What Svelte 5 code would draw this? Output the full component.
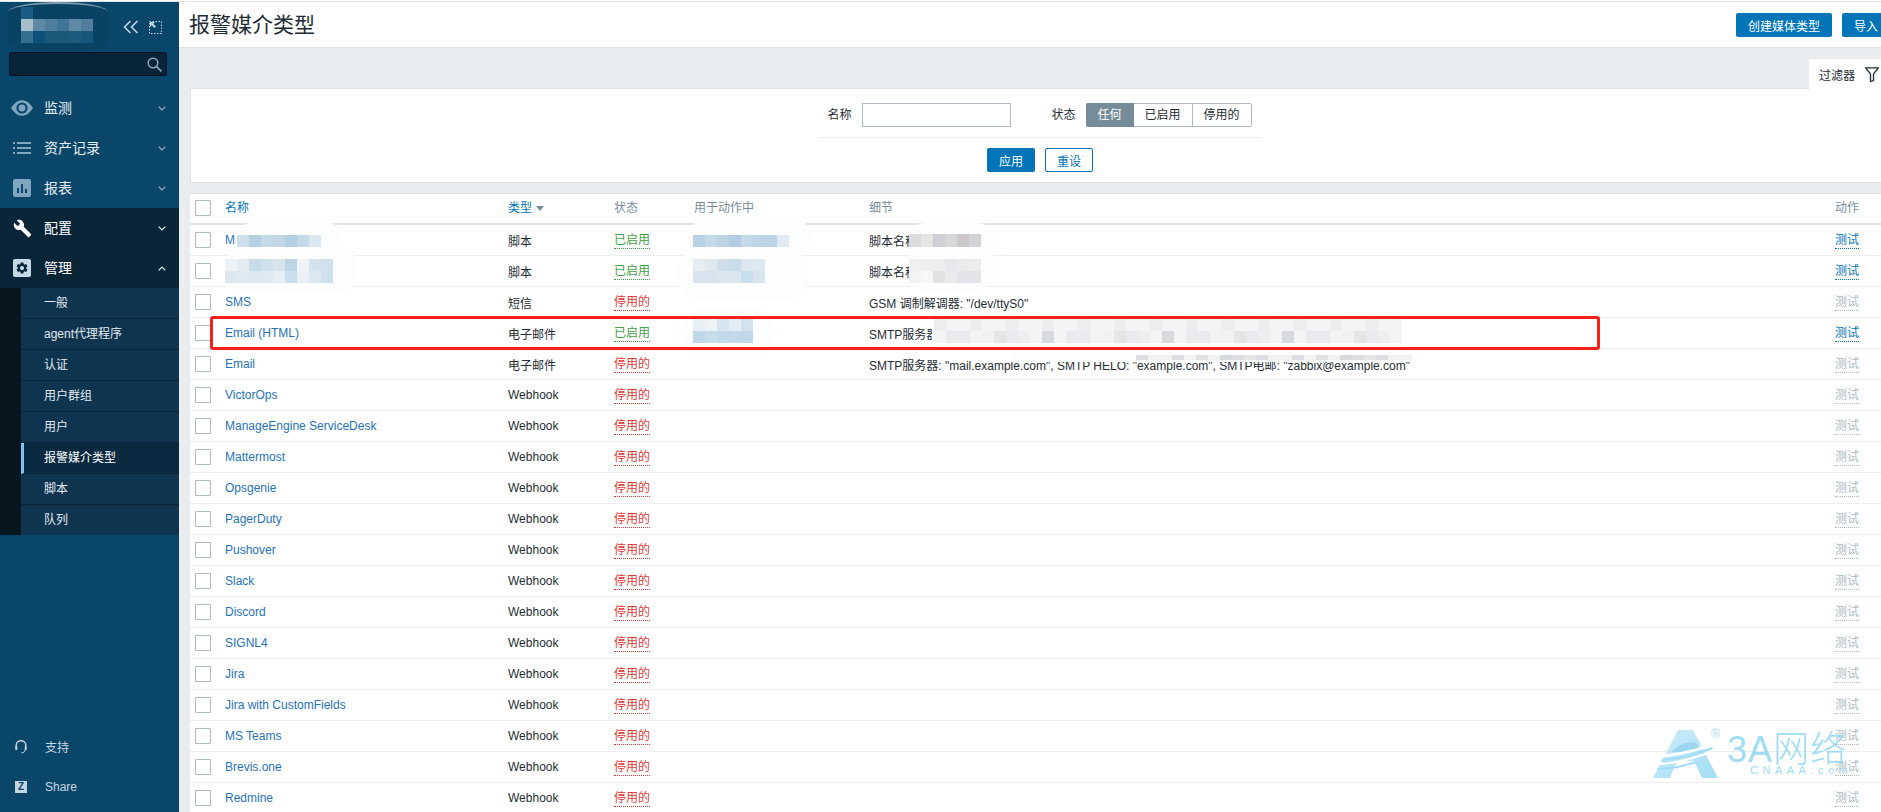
<script>
  const menu = [
    { label: '监测', icon: 'eye', open: false },
    { label: '资产记录', icon: 'list', open: false },
    { label: '报表', icon: 'chart', open: false },
    { label: '配置', icon: 'wrench', open: false, dark: true },
    { label: '管理', icon: 'gear', open: true, dark: true }
  ]

  const subItems = ['一般', 'agent代理程序', '认证', '用户群组', '用户', '报警媒介类型', '脚本', '队列']

  const rows = [
    { name: 'M', type: '脚本', on: true, detail: '脚本名称', test: true },
    { name: '', type: '脚本', on: true, detail: '脚本名称', test: true },
    { name: 'SMS', type: '短信', detail: 'GSM 调制解调器: "/dev/ttyS0"' },
    { name: 'Email (HTML)', type: '电子邮件', on: true, detail: 'SMTP服务器', test: true },
    { name: 'Email', type: '电子邮件', detail: 'SMTP服务器: "mail.example.com", SMTP HELO: "example.com", SMTP电邮: "zabbix@example.com"' },
    ...['VictorOps', 'ManageEngine ServiceDesk', 'Mattermost', 'Opsgenie', 'PagerDuty', 'Pushover', 'Slack', 'Discord', 'SIGNL4', 'Jira', 'Jira with CustomFields', 'MS Teams', 'Brevis.one', 'Redmine'].map((name) => ({ name, type: 'Webhook', detail: '' }))
  ]

  const greys = ['#f1f2f2', '#e6e5e6', '#dcdde1', '#ced0d4', '#e9ebee', '#d6dadd', '#f5f4f4', '#dfe1e3', '#c8cdd0', '#eceef0']
  const noise = (n, seed) => Array.from({ length: n }, (_, i) => greys[(i * 7 + seed * 3 + (i % 5) * i) % greys.length])

  // blurred-out parts of the screenshot
  const smudges = [
    { x: 240, y: 222, w: 100, h: 26, r: 14 },
    { x: 225, y: 248, w: 132, h: 44, r: 18 },
    { x: 690, y: 216, w: 120, h: 44, r: 20 },
    { x: 678, y: 248, w: 130, h: 52, r: 22 },
    { x: 684, y: 308, w: 88, h: 50, r: 20 },
    { x: 909, y: 223, w: 84, h: 68, r: 16 },
    { x: 932, y: 312, w: 470, h: 38, r: 6 },
    { x: 1011, y: 352, w: 401, h: 10, r: 0 }
  ]

  const patches = [
    { x: 237, y: 235, cw: 12, ch: 12, cols: 7, cells: ['#cfe0ed', '#b5cfe3', '#c6d9e8', '#c5d7e6', '#b5cfe3', '#c6d9e8', '#dbe8f1'] },
    { x: 225, y: 259, cw: 12, ch: 12, cols: 9, cells: ['#edf2f7', '#e4ecf3', '#c8dbe8', '#d0e1ec', '#d7e4ee', '#bdd4e5', '#f0f4f8', '#d5e3ee', '#cfe0ec', '#dce8f1', '#e0eaf2', '#dde8f1', '#dfe9f2', '#e8eef5', '#cbdeeb', '#e9eff6', '#dce8f1', '#cde0ec'] },
    { x: 693, y: 235, cw: 12, ch: 12, cols: 8, cells: ['#b9d1e5', '#c6d9e8', '#bed3e4', '#b2cde3', '#c5d9e8', '#bfd4e6', '#bdd3e6', '#e2eaf2'] },
    { x: 693, y: 259, cw: 12, ch: 12, cols: 6, cells: ['#e6edf5', '#e0e8ef', '#cfdde8', '#c9dce9', '#dbe6ef', '#dee8f0', '#d7e4ee', '#d7e4ee', '#dbe6ef', '#dbe6ef', '#c9deeb', '#d7e5ef'] },
    { x: 693, y: 319, cw: 12, ch: 12, cols: 5, cells: ['#e8eff6', '#eef3f8', '#d5e4ee', '#e3edf3', '#d3e2ec', '#c2d7e8', '#c8dcea', '#c2d9e9', '#c3d9e9', '#c2d8e8'] },
    { x: 909, y: 234, cw: 12, ch: 13, cols: 6, cells: ['#dcdcdf', '#e6e5e1', '#cfd0d6', '#d7d6da', '#ccc8cc', '#d0d4d7'] },
    { x: 909, y: 259, cw: 12, ch: 12, cols: 6, cells: ['#f0f0f1', '#efeff0', '#eeeeef', '#e8e8ec', '#ebebed', '#ececee', '#f3f3f1', '#f7f7f4', '#e2e2e3', '#eaeaec', '#e2e4e9', '#e3e3e8'] },
    { x: 934, y: 319, cw: 12, ch: 12, cols: 39, cells: [...noise(39, 1).map((c, i) => (i % 3 ? '#f3f4f4' : '#eceeee')), ...noise(39, 2)] },
    { x: 1136, y: 355, cw: 12, ch: 5, cols: 23, cells: noise(23, 4) }
  ]

  const logoCells = ['#1b5c85', '#0a4264', '#0a4264', '#0a4264', '#0a4264', '#0a4264', '#a9bfcc', '#5f8aa5', '#4f7f9c', '#3f7595', '#5f8aa5', '#4f7f9c', '#346f90', '#0c5179', '#1c5878', '#1c5878', '#1f5b7d', '#17557a']
</script>

<div class="app">
  <div class="topline"></div>
  <div class="frame">
    <aside class="sidebar">
      <div class="brand">
        <div class="brand-blur"></div>
        <div class="brand-cells">
          {#each logoCells as c}
            <i style="background:{c}"></i>
          {/each}
        </div>
        <div class="brand-tools">
          <svg width="16" height="14" viewBox="0 0 16 14" fill="none" stroke="#c3d5e0" stroke-width="1.6">
            <path d="M7.5 1 1.5 7l6 6M14.5 1l-6 6 6 6" />
          </svg>
          <svg width="13" height="13" viewBox="0 0 13 13" fill="none">
            <rect x=".5" y=".5" width="12" height="12" stroke="#c3d5e0" stroke-dasharray="1.5 1.5" />
            <path d="M1 1h5L4.3 2.7 7 5.4 5.4 7 2.7 4.3 1 6z" fill="#c3d5e0" />
          </svg>
        </div>
      </div>
      <div class="search">
        <svg width="15" height="15" viewBox="0 0 15 15" fill="none" stroke="#8fa9b9" stroke-width="1.5">
          <circle cx="6" cy="6" r="4.8" />
          <path d="M9.6 9.6 14.4 14.4" />
        </svg>
      </div>

      <nav class="nav">
        {#each menu as item}
          <div class="nav-item" class:dark={item.dark}>
            <span class="nav-icon">
              {#if item.icon === 'eye'}
                <svg width="22" height="16" viewBox="0 0 22 16">
                  <path d="M0 8C3.5 2.6 7 .2 11 .2S18.500 2.600 22 8c-3.500 5.400-7 7.800-11 7.800S3.500 13.400 0 8z" fill="#7ea6bf" />
                  <circle cx="11" cy="8" r="5.600" fill="#0a466a" />
                  <circle cx="11" cy="8" r="3.400" fill="#7ea6bf" />
                </svg>
              {:else if item.icon === 'list'}
                <svg width="18" height="12" viewBox="0 0 18 12" fill="#7ea6bf">
                  <rect width="2" height="2" /><rect x="4" width="14" height="2" />
                  <rect y="5" width="2" height="2" /><rect x="4" y="5" width="14" height="2" />
                  <rect y="10" width="2" height="2" /><rect x="4" y="10" width="14" height="2" />
                </svg>
              {:else if item.icon === 'chart'}
                <svg width="18" height="18" viewBox="0 0 18 18">
                  <rect width="18" height="18" rx="2" fill="#7ea6bf" />
                  <path d="M4 9h2v5H4zM8 5h2v9H8zM12 10h2v4h-2z" fill="#0a466a" />
                </svg>
              {:else if item.icon === 'wrench'}
                <svg width="19" height="19" viewBox="0 0 24 24" fill="#fff">
                  <path d="M22.700 19l-9.100-9.100c.9-2.300.4-5-1.500-6.900-2-2-5-2.400-7.400-1.300L9 6 6 9 1.600 4.700C.4 7.100.9 10.100 2.900 12.100c1.900 1.900 4.600 2.400 6.900 1.500l9.100 9.100c.4.4 1 .4 1.400 0l2.300-2.300c.5-.4.5-1.100.1-1.400z" />
                </svg>
              {:else}
                <svg width="18" height="18" viewBox="0 0 18 18">
                  <rect width="18" height="18" rx="2" fill="#c3d9e6" />
                  <path transform="translate(2 2) scale(.583)" fill="#0a2538" d="M19.140 12.940c.04-.3.06-.61.06-.94 0-.32-.02-.64-.07-.94l2.030-1.580c.18-.14.23-.41.12-.61l-1.920-3.320c-.12-.22-.37-.29-.59-.22l-2.390.96c-.5-.38-1.030-.7-1.620-.94l-.36-2.540c-.04-.24-.24-.41-.48-.41h-3.840c-.24 0-.43.17-.47.41l-.36 2.540c-.59.24-1.130.57-1.620.94l-2.390-.96c-.22-.08-.47 0-.59.22L2.740 8.870c-.12.21-.08.47.12.61l2.030 1.580c-.05.3-.07.62-.07.94s.02.64.07.94l-2.030 1.580c-.18.14-.23.41-.12.61l1.920 3.320c.12.22.37.29.59.22l2.390-.96c.5.38 1.030.7 1.620.94l.36 2.540c.05.24.24.41.48.41h3.840c.24 0 .44-.17.47-.41l.36-2.540c.59-.24 1.130-.56 1.620-.94l2.390.96c.22.08.47 0 .59-.22l1.920-3.320c.12-.22.07-.47-.12-.61l-2.010-1.580zM12 15.600c-1.980 0-3.600-1.620-3.600-3.600s1.620-3.600 3.600-3.600 3.600 1.620 3.600 3.600-1.620 3.600-3.600 3.600z" />
                </svg>
              {/if}
            </span>
            <span class="nav-label">{item.label}</span>
            <svg class="chev" width="8" height="5" viewBox="0 0 8 5" fill="none" stroke={item.dark ? '#e6eef3' : '#8fb0c4'} stroke-width="1.200">
              <path d={item.open ? 'M.7 4.300 4 1l3.300 3.300' : 'M.7.7 4 4l3.300-3.300'} />
            </svg>
          </div>
        {/each}

        <ul class="sub">
          {#each subItems as s}
            <li class:selected={s === '报警媒介类型'}>{s}</li>
          {/each}
        </ul>
      </nav>

      <div class="side-foot">
        <div class="foot-item">
          <svg width="12" height="14" viewBox="0 0 12 14" fill="none" stroke="#c3d5e0" stroke-width="1.500">
            <path d="M1.200 8V5.500a4.800 4.800 0 0 1 9.600 0V8" />
            <rect x=".3" y="6.500" width="2" height="3.500" fill="#c3d5e0" stroke="none" />
            <rect x="9.700" y="6.500" width="2" height="3.500" fill="#c3d5e0" stroke="none" />
            <path d="M10 10c0 1.800-1.500 2.800-3.500 2.800" stroke-width="1" />
          </svg>
          <span class="foot-cjk">支持</span>
        </div>
        <div class="foot-item">
          <span class="z-mark">Z</span>
          <span>Share</span>
        </div>
      </div>
    </aside>

    <main class="content">
      <header class="page-head">
        <h1>报警媒介类型</h1>
        <div class="head-actions">
          <button class="btn">创建媒体类型</button>
          <button class="btn">导入</button>
        </div>
      </header>

      <div class="filter-tabs">
        <div class="filter-tab">
          <span>过滤器</span>
          <svg width="14" height="15" viewBox="0 0 14 15" fill="none" stroke="#1f2c33" stroke-width="1.300">
            <path d="M.7.800h12.600L8.500 7v6.500l-3 1V7z" />
          </svg>
        </div>
      </div>

      <section class="filter">
        <div class="filter-form">
          <label for="fname">名称</label>
          <input id="fname" class="text-input" />
          <span class="status-label">状态</span>
          <div class="seg">
            <span class="seg-on">任何</span>
            <span>已启用</span>
            <span>停用的</span>
          </div>
        </div>
        <div class="filter-buttons">
          <button class="btn">应用</button>
          <button class="btn outline">重设</button>
        </div>
      </section>

      <table class="list">
        <colgroup>
          <col style="width:30px" /><col style="width:283px" /><col style="width:106px" /><col style="width:80px" /><col style="width:175px" /><col /><col style="width:51px" />
        </colgroup>
        <thead>
          <tr>
            <th class="head-check"><span class="check"></span></th>
            <th class="sort">名称</th>
            <th class="sort">类型 <span class="tri"></span></th>
            <th>状态</th>
            <th>用于动作中</th>
            <th>细节</th>
            <th>动作</th>
          </tr>
        </thead>
        <tbody>
          {#each rows as row}
            <tr>
              <td><span class="check"></span></td>
              <td class="name">{row.name}</td>
              <td>{row.type}</td>
              <td><span class="state" class:on={row.on}>{row.on ? '已启用' : '停用的'}</span></td>
              <td></td>
              <td>{row.detail}</td>
              <td><span class="test" class:live={row.test}>测试</span></td>
            </tr>
          {/each}
        </tbody>
      </table>
    </main>
  </div>

  {#each smudges as s}
    <div class="smudge" style="left:{s.x}px;top:{s.y}px;width:{s.w}px;height:{s.h}px;border-radius:{s.r}px"></div>
  {/each}
  {#each patches as p}
    <div class="patch" style="left:{p.x}px;top:{p.y}px;grid-template-columns:repeat({p.cols},{p.cw}px);grid-auto-rows:{p.ch}px">
      {#each p.cells as c}
        <i style="background:{c}"></i>
      {/each}
    </div>
  {/each}

  <div class="redbox"></div>

  <div class="watermark">
    <svg width="66" height="49" viewBox="0 0 66 49">
      <defs>
        <linearGradient id="wm" x1="0" y1="0" x2="1" y2="1">
          <stop offset="0" stop-color="#c6e9f9" />
          <stop offset="1" stop-color="#94d8f5" />
        </linearGradient>
      </defs>
      <path d="M25 0h15l25 48H49L41 31H24l-7 17H0z" fill="url(#wm)" />
      <path d="M12 24c16-1 30-6 47-11l1 3c-18 5-31 10-49 11z" fill="#fff" />
      <path d="M9 29c18-1 32-6 50-12l1 2c-18 6-32 11-52 12z" fill="#8fd8f5" />
      <path d="M7 33c20-1 34-7 52-12l1 2c-18 5-32 11-54 12z" fill="#fff" />
      <path d="M5 38c20-1 28-4 38-7l1 2c-12 3-18 6-40 7z" fill="#8fd8f5" />
      <path d="M30 14c4-2 8-2 13-1l3 5c-6 1-12 3-18 4-4 0-8 1-9 0 3-4 6-6 11-8z" fill="#6fbfe6" opacity=".55" />
    </svg>
    <span class="wm-reg">®</span>
    <span class="wm-name">3A网络</span>
    <span class="wm-sub">CNAAA.com</span>
  </div>
</div>

<style>
  :global(body) {
    margin: 0;
    background: #e9edf0;
  }

  .app {
    position: relative;
    width: 1881px;
    height: 812px;
    overflow: hidden;
    font-family: 'Liberation Sans', 'Noto Sans CJK SC', sans-serif;
    font-size: 12px;
    color: #1f2c33;
    background: #e9edf0;
  }

  .topline {
    height: 1px;
    background: #fff;
    border-bottom: 1px solid #dfe4e7;
  }

  .frame {
    display: flex;
    height: 810px;
  }

  /* sidebar */
  .sidebar {
    position: relative;
    width: 179px;
    flex: none;
    display: flex;
    flex-direction: column;
    background: #0a466a;
    color: #e8eff4;
  }

  .brand {
    position: relative;
    height: 50px;
    flex: none;
  }

  .brand-blur {
    position: absolute;
    left: 8px;
    top: 0;
    width: 100px;
    height: 50px;
    border-radius: 50% / 10px;
    background: #0a4264;
    border-top: 2px solid #7d9cb0;
    box-sizing: border-box;
  }

  .brand-cells {
    position: absolute;
    left: 21px;
    top: 5px;
    display: grid;
    grid-template-columns: repeat(6, 12px);
    grid-auto-rows: 12px;
  }

  .brand-tools {
    position: absolute;
    left: 123px;
    top: 18px;
    display: flex;
    align-items: center;
    gap: 10px;
  }

  .search {
    height: 24px;
    margin: 0 12px 0 9px;
    display: flex;
    align-items: center;
    justify-content: flex-end;
    padding-right: 4px;
    background: #072438;
    border: 1px solid #04131d;
    border-radius: 2px;
    flex: none;
    box-sizing: border-box;
    width: 158px;
  }

  .nav {
    margin-top: 12px;
  }

  .nav-item {
    height: 40px;
    display: flex;
    align-items: center;
    position: relative;
    padding-left: 10px;
    font-size: 14px;
  }

  .nav-label {
    padding-bottom: 2px;
  }

  .nav-item.dark {
    background: #0a2538;
    color: #fff;
  }

  .nav-icon {
    width: 34px;
    display: flex;
    justify-content: center;
    padding-right: 10px;
    box-sizing: border-box;
  }

  .chev {
    position: absolute;
    left: 158px;
    top: 18px;
  }

  .sub {
    list-style: none;
    margin: 0;
    padding: 0 0 0 21px;
    background: #06161f;
  }

  .sub li {
    height: 30px;
    line-height: 30px;
    padding-left: 23px;
    background: #0f3450;
    border-bottom: 1px solid #0a2538;
    color: #e2ebf1;
  }

  .sub li:last-child {
    border-bottom: 0;
  }

  .sub li.selected {
    background: #0a2a40;
    border-left: 3px solid #7fc4ee;
    padding-left: 20px;
    color: #fff;
  }

  .side-foot {
    margin-top: auto;
    padding-bottom: 5px;
  }

  .foot-item {
    height: 40px;
    display: flex;
    align-items: center;
    gap: 18px;
    padding-left: 15px;
    color: #c8d8e2;
  }

  .foot-cjk {
    padding-bottom: 2px;
  }

  .z-mark {
    width: 12px;
    height: 12px;
    background: #c3d5e0;
    color: #0a466a;
    font-size: 10px;
    font-weight: bold;
    line-height: 12px;
    text-align: center;
  }

  /* main column */
  .content {
    flex: 1;
    min-width: 0;
    overflow: hidden;
  }

  .page-head {
    height: 45px;
    display: flex;
    align-items: center;
    justify-content: space-between;
    padding-left: 10px;
    background: #fff;
    border-bottom: 1px solid #dfe4e7;
  }

  h1 {
    margin: 0;
    font-size: 21px;
    font-weight: 400;
    line-height: 1;
    margin-bottom: 1px;
  }

  .head-actions {
    display: flex;
    flex: none;
    gap: 10px;
    margin: 1px -9px 0 0;
  }

  .btn {
    height: 24px;
    padding: 0 12px;
    box-sizing: border-box;
    font: inherit;
    color: #fff;
    background: #0275b8;
    border: 0;
    border-radius: 2px;
    white-space: nowrap;
  }

  .btn.outline {
    background: #fff;
    color: #0275b8;
    border: 1px solid #0275b8;
    padding: 0 11px;
  }

  .filter-tabs {
    height: 40px;
    display: flex;
    justify-content: flex-end;
    align-items: flex-end;
    margin-left: 11px;
  }

  .filter-tab {
    width: 72px;
    height: 30px;
    box-sizing: border-box;
    background: #fff;
    display: flex;
    align-items: center;
    gap: 10px;
    padding-left: 10px;
    margin-bottom: -1px;
    position: relative;
    z-index: 1;
  }

  .filter {
    margin-left: 11px;
    height: 95px;
    box-sizing: border-box;
    padding-left: 8px;
    background: #fff;
    border-top: 1px solid #dfe4e7;
    border-bottom: 1px solid #dfe4e7;
    border-left: 1px solid #dfe4e7;
  }

  .filter-form {
    width: 443px;
    height: 49px;
    margin: 0 auto;
    padding: 14px 0 0 9px;
    box-sizing: border-box;
    display: flex;
    align-items: flex-start;
    border-bottom: 1px solid #ebeef0;
  }

  .filter-form label,
  .status-label {
    line-height: 24px;
  }

  .text-input {
    width: 149px;
    height: 24px;
    box-sizing: border-box;
    margin: 0 41px 0 10px;
    border: 1px solid #acbbc2;
    background: #fff;
    padding: 0;
  }

  .seg {
    display: flex;
    margin-left: 10px;
    height: 24px;
    box-sizing: border-box;
    border: 1px solid #acbbc2;
    border-radius: 2px;
    line-height: 22px;
  }

  .seg span {
    padding: 0 11px;
    border-left: 1px solid #acbbc2;
  }

  .seg span.seg-on {
    margin: -1px 0 -1px -1px;
    padding: 0 12px;
    line-height: 24px;
    background: #768d99;
    color: #fff;
    border: 0;
    border-radius: 2px 0 0 2px;
  }

  .seg-on + span {
    border-left: 0 !important;
  }

  .filter-buttons {
    display: flex;
    justify-content: center;
    gap: 10px;
    margin-top: 10px;
  }

  /* table */
  .list {
    margin: 10px 0 0 11px;
    width: 1691px;
    table-layout: fixed;
    border-collapse: separate;
    border-spacing: 0;
    background: #fff;
  }

  .list th {
    height: 25px;
    padding: 0 0 4px 5px;
    text-align: left;
    font-weight: 400;
    color: #768d99;
    border-top: 1px solid #dfe4e7;
    border-bottom: 2px solid #dfe4e7;
  }

  .list th.head-check {
    padding-bottom: 2px;
    height: 27px;
  }

  .list th.sort {
    color: #0275b8;
  }

  .tri {
    display: inline-block;
    width: 0;
    height: 0;
    margin-left: 1px;
    border: 4px solid transparent;
    border-top: 5px solid #768d99;
    border-bottom: 0;
    vertical-align: 1px;
  }

  .list td {
    height: 30px;
    padding: 0 0 0 5px;
    border-bottom: 1px solid #ebeef0;
    white-space: nowrap;
    overflow: visible;
  }

  .check {
    display: block;
    width: 16px;
    height: 16px;
    box-sizing: border-box;
    background: #fff;
    border: 1px solid #acbbc2;
    border-radius: 1px;
  }

  .name {
    color: #1f72b8;
  }

  .state,
  .test {
    display: inline-block;
    line-height: 15px;
    vertical-align: -1px;
  }

  .state {
    color: #e33734;
    border-bottom: 1px dotted #e33734;
  }

  .state.on {
    color: #429e47;
    border-bottom-color: #429e47;
  }

  .test {
    color: #acbbc2;
    border-bottom: 1px dotted #acbbc2;
  }

  .test.live {
    color: #0275b8;
    border-bottom-color: #0275b8;
  }

  /* overlays that sit on top of the screenshot */
  .smudge {
    position: absolute;
    background: #fcfdfd;
  }

  .patch {
    position: absolute;
    display: grid;
  }

  .redbox {
    position: absolute;
    left: 210px;
    top: 316px;
    width: 1390px;
    height: 34px;
    box-sizing: border-box;
    border: 3px solid #f5201a;
    border-radius: 3px;
  }

  .watermark {
    position: absolute;
    left: 1653px;
    top: 730px;
    width: 200px;
    height: 50px;
    color: #8fd8f5;
    opacity: 0.85;
  }

  .wm-reg {
    position: absolute;
    left: 58px;
    top: -3px;
    font-size: 12px;
  }

  .wm-name {
    position: absolute;
    left: 74px;
    top: 0;
    font-size: 36px;
    font-weight: 300;
    line-height: 40px;
    letter-spacing: 1px;
    white-space: nowrap;
  }

  .wm-sub {
    position: absolute;
    left: 97px;
    top: 34px;
    font-size: 11px;
    letter-spacing: 4.5px;
  }
</style>
